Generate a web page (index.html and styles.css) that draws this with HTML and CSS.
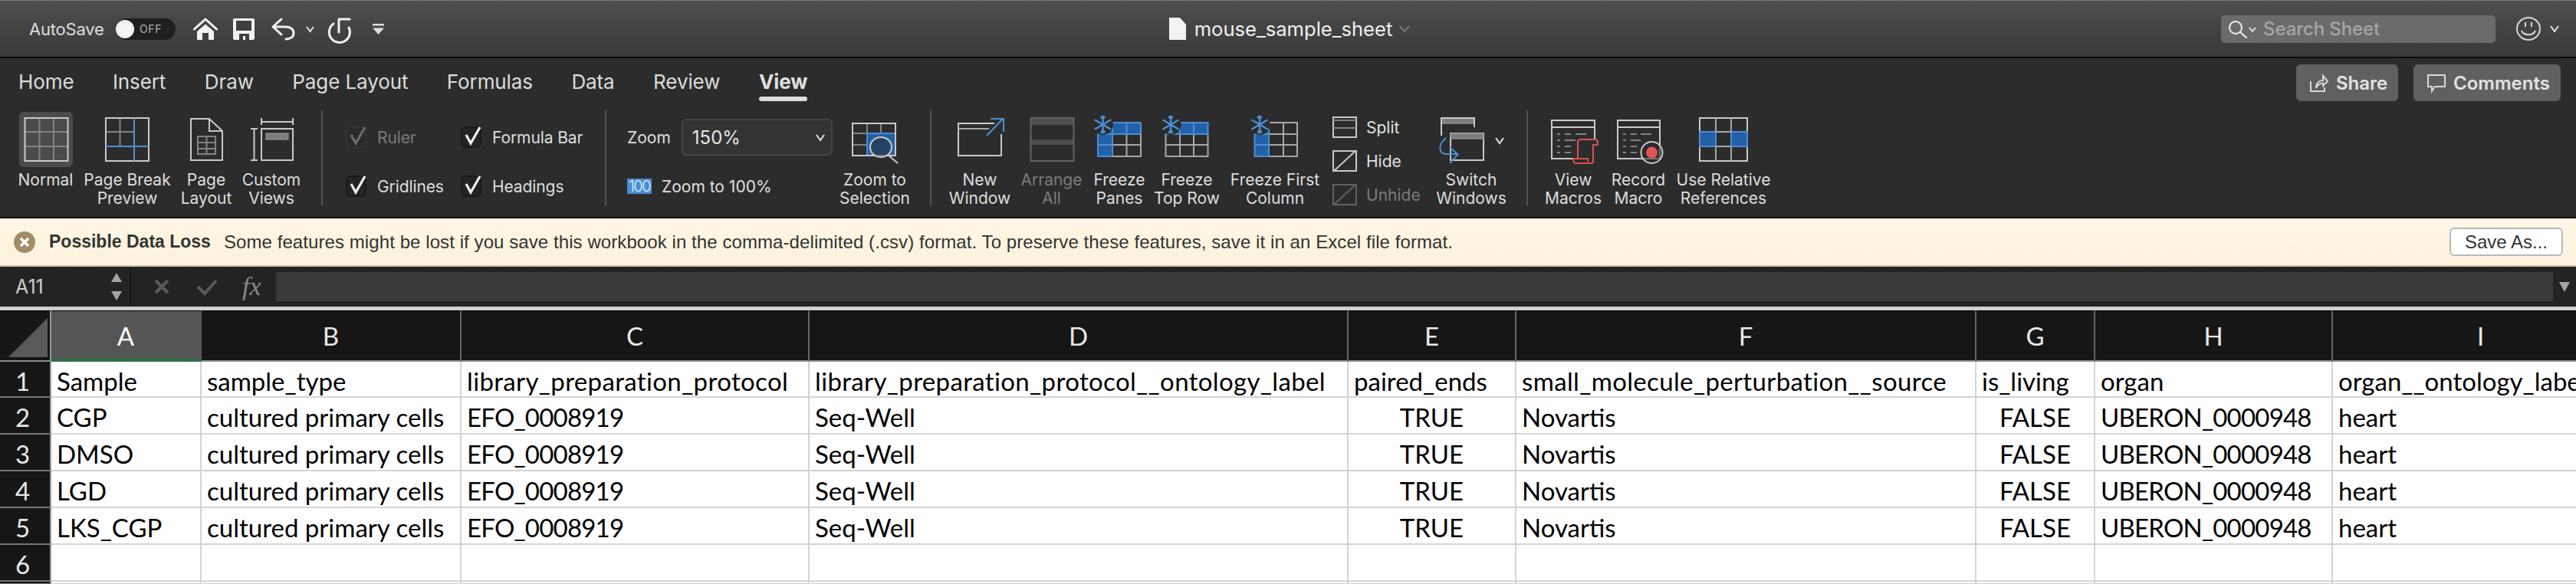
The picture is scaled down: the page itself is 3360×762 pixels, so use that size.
FILE: index.html
```html
<!DOCTYPE html>
<html lang="en">
<head>
<meta charset="utf-8">
<title>mouse_sample_sheet</title>
<link rel="stylesheet" href="styles.css">
</head>
<body>
<svg class="defs" width="0" height="0" aria-hidden="true">
  <symbol id="snow" viewBox="-14 -14 28 28" overflow="visible">
    <circle cx="0" cy="0" r="14" class="bgfill"/>
    <g class="snowline">
      <path d="M0 -12.500V12.500M-11 -6.500L11 6.500M-11 6.500L11 -6.500"/>
      <path d="M-3 -11L0 -8L3 -11M-3 11L0 8L3 11"/>
    </g>
  </symbol>
</svg>

<header class="titlebar">
  <div class="qat">
    <span class="autosave">AutoSave</span>
    <span class="toggle"><span class="knob"></span><span class="off">OFF</span></span>
    <svg class="q-home" width="32" height="30" viewBox="0 0 32 30"><path class="wline" d="M1.500 15L16 2L30.500 15"/><path class="wfill" d="M5 18L16 8.500L27 18V29H20V20H12V29H5Z"/></svg>
    <svg class="q-save" width="28" height="28" viewBox="0 0 28 28"><path class="wfill" d="M2 0H26A2 2 0 0 1 28 2V26A2 2 0 0 1 26 28H2A2 2 0 0 1 0 26V2A2 2 0 0 1 2 0Z"/><rect class="dfill" x="4" y="3" width="20" height="13"/><rect class="dfill" x="8" y="20" width="13" height="8"/><rect class="wfill" x="13" y="23" width="3" height="5"/></svg>
    <svg class="q-undo" width="32" height="28" viewBox="0 0 32 28"><path class="wline" d="M14 1L3 11L14 21M3 11H19C26 11 30 14 30 19C30 24 26 27 20 27"/></svg>
    <svg class="q-chev" width="11" height="8" viewBox="0 0 11 8"><path class="chev" d="M1 1L5.500 7L10 1"/></svg>
    <svg class="q-redo" width="31" height="30" viewBox="0 0 31 30"><path class="wline" d="M29 2H15V19M8 8A13.500 13.500 0 1 0 28 13"/></svg>
    <svg class="q-more" width="15" height="14" viewBox="0 0 15 14"><rect class="lfill" x="0" y="0" width="15" height="2.500"/><path class="lfill" d="M0 5.500H15L7.500 14Z"/></svg>
  </div>
  <div class="doc">
    <svg width="22" height="29" viewBox="0 0 22 29"><path class="wfill" d="M0 0H14L22 9V29H0Z"/></svg>
    <span class="docname">mouse_sample_sheet</span>
    <svg width="14" height="9" viewBox="0 0 14 9"><path class="chev dimchev" d="M1 1L7 8L13 1"/></svg>
  </div>
  <div class="tb-right">
    <div class="search">
      <svg width="36" height="22" viewBox="0 0 36 22"><circle class="wline thin" cx="9" cy="9" r="8"/><path class="wline thin" d="M15 15L23 22"/><path class="chev" d="M27 9L31 14L35 9"/></svg>
      <span class="searchtext">Search Sheet</span>
    </div>
    <svg class="smile" width="32" height="31" viewBox="0 0 32 31"><ellipse class="gline" cx="16" cy="15.500" rx="15" ry="14.500"/><path class="gline" d="M12 7V13M20 7V13M7 18C10 25 22 25 25 18"/></svg>
    <svg class="smile-chev" width="12" height="9" viewBox="0 0 12 9"><path class="chev" d="M1 1L6 8L11 1"/></svg>
  </div>
</header>

<section class="ribbon">
  <nav class="tabs">
    <div class="tablist">
      <span class="tab">Home</span><span class="tab">Insert</span><span class="tab">Draw</span><span class="tab">Page Layout</span><span class="tab">Formulas</span><span class="tab">Data</span><span class="tab">Review</span><span class="tab active">View</span>
    </div>
    <div class="actions">
      <button class="act share"><svg width="24" height="23" viewBox="0 0 24 23"><path class="gline" d="M1 9V22H19V17M8 18C8 11 12 8 17 8V2L23 9L17 15V11.500C13 11.500 10 14 8 18Z"/></svg>Share</button>
      <button class="act comments"><svg width="24" height="23" viewBox="0 0 24 23"><path class="gline" d="M1 1H23V16H10L6 22V16H1Z"/></svg>Comments</button>
    </div>
  </nav>

  <div class="groups">
    <div class="rb w103">
      <svg class="ic" viewBox="0 0 70 72"><rect class="hl" x="0" y="0" width="70" height="72" rx="6"/><path class="in" d="M26.500 8V64M45 8V64M7.500 26H63.500M7.500 45H63.500"/><rect class="ln" x="7.500" y="8" width="56" height="56"/></svg>
      <span class="lbl">Normal</span>
    </div>
    <div class="rb w110">
      <svg class="ic" viewBox="0 0 70 72"><path class="in" d="M25.500 8V45M7 26H44"/><rect class="ln" x="7" y="8" width="56" height="56"/><path class="bl" d="M44 8V64M7 45H63"/></svg>
      <span class="lbl">Page Break<br>Preview</span>
    </div>
    <div class="rb w96">
      <svg class="ic" viewBox="0 0 70 72"><path class="ln" d="M15 9H39L56 25V63H15ZM39 9V25H56"/><path class="in" d="M24 32H47V55H24ZM24 40H47M24 48H47M35.500 32V55"/></svg>
      <span class="lbl">Page<br>Layout</span>
    </div>
    <div class="rb w74">
      <svg class="ic" viewBox="0 0 70 72"><path class="ln" d="M22 13H63M22 8V17M63 8V17M12.500 22V63M8 22H17M8 63H17"/><rect class="ln" x="22" y="22" width="41" height="41"/><rect class="grayfill" x="28" y="28" width="29" height="8"/></svg>
      <span class="lbl">Custom<br>Views</span>
    </div>

    <span class="sep ml28"></span>

    <div class="checks">
      <label class="chk off-state"><svg width="27" height="28" viewBox="0 0 27 28"><rect class="cbox" x="1" y="1" width="25" height="26" rx="5"/><path class="cmark" d="M7 11L13 22L25 1"/></svg><span>Ruler</span></label>
      <label class="chk"><svg width="27" height="28" viewBox="0 0 27 28"><rect class="cbox" x="1" y="1" width="25" height="26" rx="5"/><path class="cmark" d="M7 11L13 22L25 1"/></svg><span>Formula Bar</span></label>
      <label class="chk"><svg width="27" height="28" viewBox="0 0 27 28"><rect class="cbox" x="1" y="1" width="25" height="26" rx="5"/><path class="cmark" d="M7 11L13 22L25 1"/></svg><span>Gridlines</span></label>
      <label class="chk"><svg width="27" height="28" viewBox="0 0 27 28"><rect class="cbox" x="1" y="1" width="25" height="26" rx="5"/><path class="cmark" d="M7 11L13 22L25 1"/></svg><span>Headings</span></label>
    </div>

    <span class="sep"></span>

    <div class="zoomgrp">
      <div class="zrow">
        <span class="zl">Zoom</span>
        <div class="combo"><span>150%</span><svg width="12" height="9" viewBox="0 0 12 9"><path class="chev" d="M1 1L6 8L11 1"/></svg></div>
      </div>
      <div class="zrow gap13">
        <span class="badge">100</span>
        <span class="zl">Zoom to 100%</span>
      </div>
    </div>

    <div class="rb w112">
      <svg class="ic" viewBox="0 0 70 72"><rect class="fb" x="25" y="28" width="37" height="29"/><path class="in" d="M25 15V57M43 15V28M6 28H62M6 43H25"/><path class="bl" d="M25 28H62V57M25 28V57"/><rect class="ln" x="6" y="15" width="56" height="42"/><ellipse class="ln lensbg" cx="43" cy="46" rx="14" ry="13"/><path class="ln" d="M52 56L65 67"/></svg>
      <span class="lbl">Zoom to<br>Selection</span>
    </div>

    <span class="sep ml16"></span>

    <div class="rb w90 ml18">
      <svg class="ic" viewBox="0 0 70 72"><path class="ln" d="M63 29V57H7V15H54"/><path class="in lt" d="M7 22H47"/><path class="bl" d="M44 31L65 9M49 9H66V26"/></svg>
      <span class="lbl">New<br>Window</span>
    </div>
    <div class="rb w80 ml8h">
      <svg class="ic" viewBox="0 0 70 72"><rect class="dimfill" x="7.500" y="8" width="56" height="9"/><rect class="dimfill" x="7.500" y="36" width="56" height="7"/><rect class="dim" x="7.500" y="8" width="56" height="56"/></svg>
      <span class="lbl disabled">Arrange<br>All</span>
    </div>
    <div class="rb w72 ml12h">
      <svg class="ic" viewBox="0 0 70 72"><rect class="fb" x="7" y="14" width="56" height="15"/><rect class="fb" x="7" y="14" width="19" height="44"/><path class="in lt" d="M26 29H63M26 43H63M26 29V58M44.500 29V58"/><path class="bl" d="M26 14V29M44.500 14V29M7 29H63M7 43H26M26 29V58M7 14H63V29M7 14V58H26"/><path class="in lt" d="M26 58H63V29"/><use href="#snow" x="0" y="3" width="27" height="27"/></svg>
      <span class="lbl">Freeze<br>Panes</span>
    </div>
    <div class="rb w88 ml8">
      <svg class="ic" viewBox="0 0 70 72"><rect class="fb" x="7.500" y="14" width="55" height="15"/><path class="in lt" d="M7.500 29V58H62.500V29M7.500 43H62.500M26 29V58M44 29V58"/><path class="bl" d="M7.500 14H62.500V29H7.500ZM26 14V29M44 14V29"/><use href="#snow" x="0.500" y="3" width="27" height="27"/></svg>
      <span class="lbl">Freeze<br>Top Row</span>
    </div>
    <div class="rb w120 ml11">
      <svg class="ic" viewBox="0 0 70 72"><rect class="fb" x="8.500" y="14" width="18.500" height="44"/><path class="in lt" d="M27 14H64V58H27M27 29H64M27 43H64M46 14V58"/><path class="bl" d="M8.500 14V58H27V14H8.500M8.500 29H27M8.500 43H27"/><use href="#snow" x="1.500" y="3" width="27" height="27"/></svg>
      <span class="lbl">Freeze First<br>Column</span>
    </div>

    <div class="stack">
      <div class="srow"><svg width="32" height="28" viewBox="0 0 32 28"><rect class="ln" x="1" y="1" width="30" height="26"/><path class="in" d="M1 5H31M1 15H31"/></svg><span>Split</span></div>
      <div class="srow"><svg width="32" height="28" viewBox="0 0 32 28"><rect class="ln" x="1" y="1" width="30" height="26"/><path class="ln" d="M2 27L30 1"/></svg><span>Hide</span></div>
      <div class="srow dis"><svg width="32" height="28" viewBox="0 0 32 28"><rect class="dim" x="1" y="1" width="30" height="26"/><path class="dim" d="M2 27L30 1"/></svg><span>Unhide</span></div>
    </div>

    <div class="rb w106">
      <svg class="ic wide" viewBox="0 0 86 72"><rect class="grayfill" x="4" y="8" width="43" height="7"/><path class="ln" d="M4 31V8H47V20"/><rect class="ln" x="16" y="28" width="43" height="35"/><rect class="grayfill" x="16" y="28" width="43" height="7"/><path class="bl" d="M10 34C0 42 0 53 9 55H25M15 46L25.500 55.500L15 67"/><path class="chev" d="M75 34L80 41L85 34"/></svg>
      <span class="lbl">Switch<br>Windows</span>
    </div>

    <span class="sep ml19"></span>

    <div class="rb w84 ml17">
      <svg class="ic" viewBox="0 0 70 72"><path class="ln" d="M35 61H7V11H63V36M7 20H63"/><path class="in" d="M14 29H18M24 29H32M38 29H52M14 37H18M24 37H38M14 45H18M24 45H32M14 53H18M24 53H32"/><path class="rd" d="M41 60V39C41 36 43 36 45 36H64C67 36 67 39 67 43H61V64C61 66 60 67 58 67H39C36 67 35 65 35 61H54V65"/></svg>
      <span class="lbl">View<br>Macros</span>
    </div>
    <div class="rb w76 ml5">
      <svg class="ic" viewBox="0 0 70 72"><path class="ln" d="M8 11H63V61H8ZM8 20H63"/><path class="in" d="M15 29H19M25 29H33M38 29H52M15 37H19M25 37H38M15 45H19M25 45H33M15 53H19M25 53H33"/><ellipse class="ln lensbg" cx="52.500" cy="53" rx="14" ry="14"/><circle class="rdfill" cx="52.500" cy="53" r="7.500"/></svg>
      <span class="lbl">Record<br>Macro</span>
    </div>
    <div class="rb w128 ml9">
      <svg class="ic" viewBox="0 0 70 72"><rect class="fb" x="4" y="26" width="21" height="19"/><rect class="fb" x="45" y="26" width="21" height="19"/><rect class="ln" x="4" y="8" width="62" height="56"/><path class="in lt" d="M25 8V64M45 8V64"/><path class="bl" d="M4 26H25V45H4ZM45 26H66V45H45Z"/><path class="in lt" d="M25 26H45M25 45H45"/></svg>
      <span class="lbl">Use Relative<br>References</span>
    </div>
  </div>
</section>

<section class="msgbar">
  <svg class="msgicon" width="28" height="28" viewBox="0 0 28 28"><circle class="msgcirc" cx="14" cy="14" r="14"/><path class="msgx" d="M9 9L19 19M19 9L9 19"/></svg>
  <strong class="msgtitle">Possible Data Loss</strong>
  <span class="msgtext">Some features might be lost if you save this workbook in the comma-delimited (.csv) format. To preserve these features, save it in an Excel file format.</span>
  <button class="saveas">Save As...</button>
</section>

<section class="formula">
  <div class="namebox">
    <span>A11</span>
    <svg width="16" height="36" viewBox="0 0 16 36"><path class="stepfill" d="M8 0L15 12H1ZM8 36L1 24H15Z"/></svg>
  </div>
  <svg class="fx-x" width="20" height="20" viewBox="0 0 20 20"><path class="fxmark" d="M2 2L18 18M18 2L2 18"/></svg>
  <svg class="fx-c" width="28" height="21" viewBox="0 0 28 21"><path class="fxmark" d="M2 10L11 19L26 2"/></svg>
  <i class="fx">fx</i>
  <div class="finput"></div>
  <svg class="fx-d" width="14" height="13" viewBox="0 0 14 13"><path class="stepfill" d="M0 0H14L7 13Z"/></svg>
</section>

<main class="sheet">
  <div class="corner"><svg width="65" height="64" viewBox="0 0 65 64"><path class="cornertri" d="M11 60L62 9V60Z"/></svg></div>
  <div class="ch sel">A</div><div class="ch">B</div><div class="ch">C</div><div class="ch">D</div><div class="ch">E</div><div class="ch">F</div><div class="ch">G</div><div class="ch">H</div><div class="ch">I</div>

  <div class="rh">1</div><div class="c">Sample</div><div class="c">sample_type</div><div class="c hd">library_preparation_protocol</div><div class="c hd">library_preparation_protocol__ontology_label</div><div class="c">paired_ends</div><div class="c hd">small_molecule_perturbation__source</div><div class="c">is_living</div><div class="c">organ</div><div class="c">organ__ontology_label</div>

  <div class="rh">2</div><div class="c">CGP</div><div class="c">cultured primary cells</div><div class="c id">EFO_0008919</div><div class="c">Seq-Well</div><div class="c mid">TRUE</div><div class="c">Novartis</div><div class="c mid">FALSE</div><div class="c id">UBERON_0000948</div><div class="c">heart</div>

  <div class="rh">3</div><div class="c">DMSO</div><div class="c">cultured primary cells</div><div class="c id">EFO_0008919</div><div class="c">Seq-Well</div><div class="c mid">TRUE</div><div class="c">Novartis</div><div class="c mid">FALSE</div><div class="c id">UBERON_0000948</div><div class="c">heart</div>

  <div class="rh">4</div><div class="c">LGD</div><div class="c">cultured primary cells</div><div class="c id">EFO_0008919</div><div class="c">Seq-Well</div><div class="c mid">TRUE</div><div class="c">Novartis</div><div class="c mid">FALSE</div><div class="c id">UBERON_0000948</div><div class="c">heart</div>

  <div class="rh">5</div><div class="c">LKS_CGP</div><div class="c">cultured primary cells</div><div class="c id">EFO_0008919</div><div class="c">Seq-Well</div><div class="c mid">TRUE</div><div class="c">Novartis</div><div class="c mid">FALSE</div><div class="c id">UBERON_0000948</div><div class="c">heart</div>

  <div class="rh">6</div><div class="c"></div><div class="c"></div><div class="c"></div><div class="c"></div><div class="c"></div><div class="c"></div><div class="c"></div><div class="c"></div><div class="c"></div>

  <div class="rh"></div><div class="c"></div><div class="c"></div><div class="c"></div><div class="c"></div><div class="c"></div><div class="c"></div><div class="c"></div><div class="c"></div><div class="c"></div>
</main>
</body>
</html>
```

FILE: styles.css
```css
* { box-sizing: border-box; }
html, body { margin: 0; padding: 0; }
body {
  width: 3360px;
  height: 762px;
  overflow: hidden;
  background: #fff;
  font-family: Inter, "Liberation Sans", sans-serif;
  color: #ddd;
}
.defs { display: block; height: 0; }
svg { display: block; flex: none; overflow: visible; }

/* shared strokes and fills */
.wfill { fill: #f2f2f2; }
.dfill { fill: #3f3f3f; }
.lfill { fill: #dcdcdc; }
.bgfill { fill: #2c2c2c; }
.wline { fill: none; stroke: #f2f2f2; stroke-width: 3; stroke-linecap: round; stroke-linejoin: round; }
.wline.thin { stroke-width: 2; }
.gline { fill: none; stroke: #d8d8d8; stroke-width: 2; }
.chev { fill: none; stroke: #e4e4e4; stroke-width: 2; }
.dimchev { stroke: #777; }
.ln { fill: none; stroke: #c9c9c9; stroke-width: 2; }
.in { fill: none; stroke: #838383; stroke-width: 2; }
.in.lt { stroke: #a8a8a8; }
.bl { fill: none; stroke: #4a8fd3; stroke-width: 2; }
.fb { fill: #2360a8; }
.dim { fill: none; stroke: #626262; stroke-width: 2; }
.dimfill { fill: #4e4e4e; }
.grayfill { fill: #7d7d7d; stroke: #a0a0a0; stroke-width: 1; }
.hl { fill: #4b4b4b; }
.rd { fill: none; stroke: #d9534f; stroke-width: 2; }
.rdfill { fill: #df5453; }
.lensbg { fill: #2c2c2c; fill-opacity: .55; }
.snowline { fill: none; stroke: #4a8fd3; stroke-width: 2.6; }

/* title bar */
.titlebar {
  height: 76px;
  display: grid;
  grid-template-columns: 1fr auto 1fr;
  align-items: center;
  background: linear-gradient(#4e4e4e, #393939);
  border-top: 1px solid #777;
  border-bottom: 2px solid #0c0c0c;
}
.qat { display: flex; align-items: center; padding-left: 38px; }
.autosave { font-size: 22px; width: 100px; color: #ddd; white-space: nowrap; letter-spacing: -.2px; }
.toggle {
  width: 78px;
  height: 28px;
  margin-left: 13px;
  border-radius: 14px;
  background: #1f1f1f;
  display: flex;
  align-items: center;
  gap: 7px;
}
.knob { width: 24px; height: 24px; border-radius: 50%; background: #f4f4f4; }
.off { font-size: 14px; color: #b4b4b4; letter-spacing: .6px; }
.q-home { margin-left: 23px; }
.q-save { margin-left: 20px; }
.q-undo { margin-left: 21px; }
.q-chev { margin-left: 14px; }
.q-redo { margin-left: 17px; }
.q-more { margin-left: 28px; }

.doc { display: flex; align-items: center; gap: 11px; margin-left: 4px; }
.docname { font-size: 25.6px; color: #f0f0f0; line-height: 30px; }
.doc svg:last-child { margin-left: -2px; }

.tb-right { display: flex; align-items: center; justify-content: flex-end; padding-right: 22px; }
.search {
  width: 358px;
  height: 36px;
  background: #6b6b6b;
  border-radius: 5px;
  display: flex;
  align-items: center;
  padding-left: 10px;
  gap: 9px;
}
.searchtext { font-size: 24px; font-weight: 500; color: #a6a6a6; letter-spacing: -.1px; }
.smile { margin-left: 27px; }
.smile-chev { margin-left: 12px; }

/* ribbon */
.ribbon {
  height: 209px;
  background: #2c2c2c;
  border-bottom: 2px solid #0c0c0c;
}
.tabs {
  height: 70px;
  display: flex;
  justify-content: space-between;
  align-items: flex-start;
  padding: 8px 20px 0 24px;
}
.tablist { display: flex; gap: 50.500px; }
.tab {
  position: relative;
  font-size: 26px;
  line-height: 46px;
  color: #dcdcdc;
  letter-spacing: -.1px;
}
.tab.active { font-weight: 700; color: #e0e0e0; }
.tab.active::after {
  content: "";
  position: absolute;
  left: 0;
  right: 0;
  top: 42px;
  height: 6px;
  border-radius: 3px;
  background: #dcdcdc;
}
.actions { display: flex; gap: 20px; }
.act {
  height: 48px;
  padding: 0 0 0 18px;
  display: flex;
  align-items: center;
  gap: 10px;
  border: 0;
  border-radius: 6px;
  background: #606060;
  color: #e2e2e2;
  font: 600 24px Inter, "Liberation Sans", sans-serif;
}
.act.share { width: 133px; }
.act.comments { width: 192px; }

.groups { display: flex; align-items: flex-start; padding-left: 8px; }
.rb { display: flex; flex-direction: column; align-items: center; flex: none; }
.ic { width: 70px; height: 72px; margin-bottom: 5px; }
.ic.wide { width: 86px; }
.lbl {
  font-size: 21px;
  line-height: 24px;
  text-align: center;
  white-space: nowrap;
  color: #dedede;
}
.lbl.disabled { color: #7b7b7b; }
.w72 { width: 72px; } .w74 { width: 74px; } .w76 { width: 76px; } .w80 { width: 80px; }
.w84 { width: 84px; } .w88 { width: 88px; } .w90 { width: 90px; } .w96 { width: 96px; }
.w103 { width: 103px; } .w106 { width: 106px; } .w110 { width: 110px; } .w112 { width: 112px; }
.w120 { width: 120px; } .w128 { width: 128px; }
.ml5 { margin-left: 5px; } .ml8 { margin-left: 8px; } .ml8h { margin-left: 8.5px; }
.ml9 { margin-left: 9px; } .ml11 { margin-left: 11px; } .ml12h { margin-left: 12.5px; }
.ml16 { margin-left: 16px; } .ml17 { margin-left: 17px; } .ml18 { margin-left: 18px; }
.ml19 { margin-left: 19px; } .ml28 { margin-left: 28px; }

.sep { width: 2px; height: 124px; margin-top: -2px; background: #525252; flex: none; }

.checks {
  width: 338px;
  margin: 1px 0 0 30px;
  display: grid;
  grid-template-columns: 150px 1fr;
  grid-auto-rows: 64px;
  align-items: center;
  font-size: 21px;
}
.chk { display: flex; align-items: center; gap: 14px; color: #dedede; letter-spacing: -.1px; white-space: nowrap; }
.chk.off-state { color: #7b7b7b; }
.cbox { fill: #242424; stroke: #1a1a1a; stroke-width: 2; }
.cmark { fill: none; stroke: #f0f0f0; stroke-width: 3.2; }
.off-state .cbox { fill: #2a2a2a; stroke: #343434; }
.off-state .cmark { stroke: #6c6c6c; }

.zoomgrp {
  width: 267px;
  margin: 1px 0 0 27px;
  display: grid;
  grid-auto-rows: 64px;
  align-items: center;
}
.zrow { display: flex; align-items: center; gap: 14px; }
.zrow.gap13 { gap: 13px; }
.zl { font-size: 21px; color: #e0e0e0; white-space: nowrap; }
.combo {
  width: 197px;
  height: 48px;
  padding: 0 8px 0 12px;
  display: flex;
  align-items: center;
  justify-content: space-between;
  background: #333;
  border: 2px solid #454545;
  border-radius: 6px;
  font-size: 24px;
  color: #e6e6e6;
}
.badge {
  width: 32px;
  height: 20px;
  background: #4a8fd3;
  color: #e4f0ff;
  font-size: 20px;
  font-weight: 300;
  line-height: 20px;
  text-align: center;
  letter-spacing: -1.5px;
}

.stack { width: 128px; margin: -2px 0 0 15px; display: grid; grid-auto-rows: 44px; align-items: center; flex: none; }
.srow { display: flex; align-items: center; gap: 12px; font-size: 21px; color: #e0e0e0; }
.srow.dis { color: #7b7b7b; }

/* message bar */
.msgbar {
  height: 63px;
  display: flex;
  align-items: center;
  padding: 0 17px 0 18px;
  background: linear-gradient(#fff7e4, #fbf2dc);
  border-bottom: 2px solid #cfc8b6;
  font-family: "Liberation Sans", Arial, sans-serif;
  color: #2a2a2a;
}
.msgcirc { fill: #a38c68; }
.msgx { fill: none; stroke: #fff; stroke-width: 3.4; }
.msgtitle { margin-left: 18px; font-size: 23px; font-weight: 700; white-space: nowrap; color: #333; }
.msgtext { margin-left: 17px; font-size: 24px; letter-spacing: .08px; white-space: nowrap; color: #333; flex: 1; }
.saveas {
  width: 148px;
  height: 37px;
  padding: 0;
  background: #fff;
  border: 2px solid #b9b9b9;
  border-radius: 6px;
  font: 400 24px "Liberation Sans", Arial, sans-serif;
  line-height: 31px;
  color: #333;
}

/* formula bar */
.formula {
  height: 52px;
  display: flex;
  align-items: center;
  background: #232323;
}
.namebox {
  width: 171px;
  height: 52px;
  display: flex;
  align-items: center;
  justify-content: space-between;
  padding: 0 9px 0 20px;
  border-right: 2px solid #171717;
  font-size: 25px;
  color: #cfcfcf;
}
.stepfill { fill: #a4a4a4; }
.fxmark { fill: none; stroke: #5a5a5a; stroke-width: 4; }
.fx-x { margin-left: 30px; }
.fx-c { margin-left: 35px; }
.fx { margin-left: 32px; width: 44px; font: italic 34px "Liberation Serif", serif; color: #888; }
.finput { flex: 1; height: 38px; background: #3a3a3a; }
.fx-d { margin: 0 8px; }

/* sheet */
.sheet {
  width: 3430px;
  height: 362px;
  display: grid;
  grid-template-columns: 67px 196px 339px 454px 703px 219px 600px 155px 310px 387px;
  grid-template-rows: 67px 47px repeat(5, 48px) 3px;
  border-top: 5px solid #cfcfcf;
  font-family: Lato, "Open Sans", sans-serif;
  font-size: 33px;
  overflow: hidden;
}
.corner {
  background: #161616;
  border-top: 1px solid #000;
  border-right: 2px solid #999;
  border-bottom: 2px solid #8c8c8c;
}
.ch {
  background: #161616;
  color: #e8e8e8;
  text-align: center;
  line-height: 64px;
  border-top: 1px solid #000;
  border-right: 2px solid #666;
  border-bottom: 2px solid #8c8c8c;
}
.ch.sel { background: #555; border-right-color: #555; border-bottom: 4px solid #2f7048; color: #fff; }
.cornertri { fill: #5a5a5a; }
.rh {
  background: #161616;
  color: #e8e8e8;
  text-align: center;
  line-height: 46px;
  padding: 2px 6px 0 0;
  border-right: 2px solid #999;
  border-bottom: 2px solid #777;
}
.c {
  background: #fff;
  color: #000;
  line-height: 46px;
  padding: 2px 0 0 7px;
  white-space: nowrap;
  border-right: 2px solid #d4d4d4;
  border-bottom: 2px solid #d4d4d4;
}
.c.mid { text-align: center; padding-left: 0; }
.c.hd { letter-spacing: .35px; }
.c.id { letter-spacing: -.8px; }
```
